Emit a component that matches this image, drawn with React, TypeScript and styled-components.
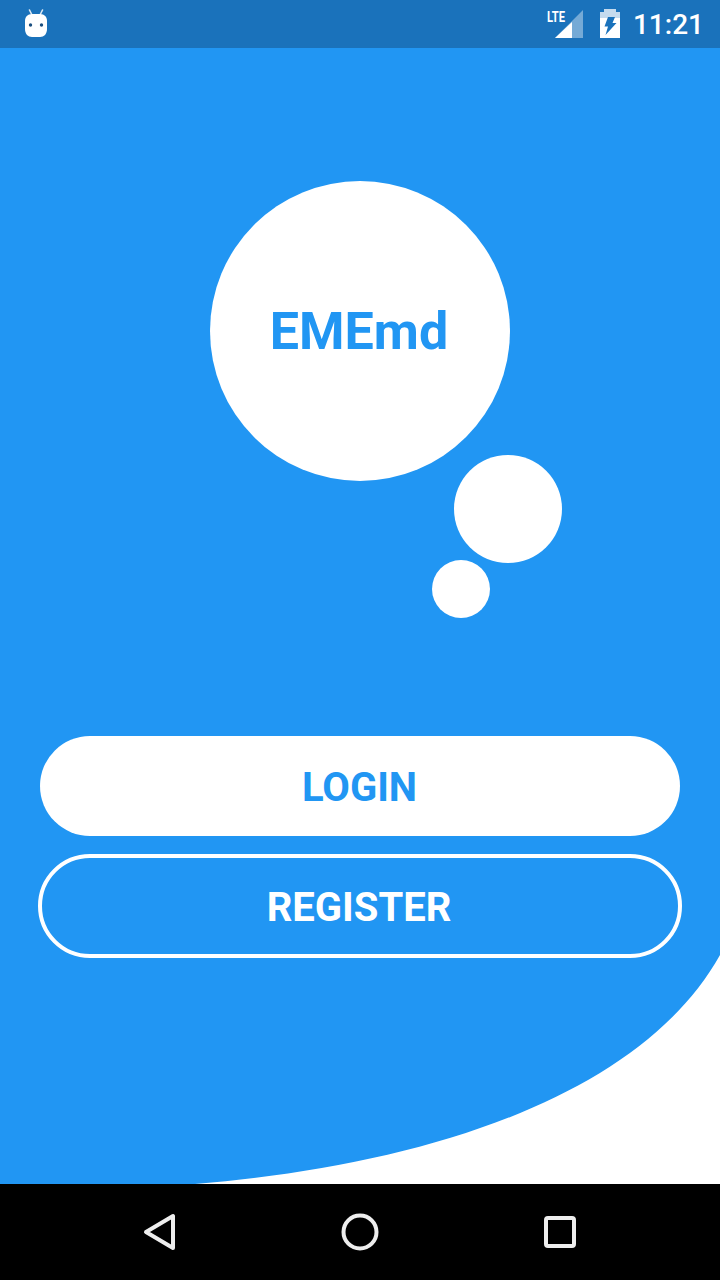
import React from 'react';
import styled, { createGlobalStyle } from 'styled-components';

const Global = createGlobalStyle`
  html, body { margin: 0; padding: 0; background: #000; }
  * { box-sizing: border-box; }
`;

const Phone = styled.div`
  width: 720px;
  height: 1280px;
  display: flex;
  flex-direction: column;
  overflow: hidden;
  font-family: Roboto, "Liberation Sans", sans-serif;
`;

const StatusBar = styled.header`
  height: 48px;
  flex: none;
  display: flex;
  align-items: center;
  justify-content: space-between;
  padding: 0 16px 0 24px;
  background: #1a72bb;
  color: #fff;
`;

const StatusGroup = styled.div`
  display: flex;
  align-items: center;
`;

const Clock = styled.span`
  font-size: 28px;
  font-weight: 500;
  line-height: 48px;
  margin-left: 13px;
  padding-top: 1px;
`;

const Screen = styled.main`
  position: relative;
  flex: 1;
  display: flex;
  flex-direction: column;
  background: #2196f3;
`;

const Swoosh = styled.svg`
  position: absolute;
  inset: 0;
`;

const Bubble = styled.div<{ $size: number; $left: number; $top: number }>`
  position: relative;
  width: ${p => p.$size}px;
  height: ${p => p.$size}px;
  margin-left: ${p => p.$left}px;
  margin-top: ${p => p.$top}px;
  border-radius: 50%;
  background: #fff;
  display: flex;
  align-items: center;
  justify-content: center;
`;

const Brand = styled.h1`
  margin: 0;
  padding: 2px 2px 0 0;
  color: #2196f3;
  font-size: 52px;
  font-weight: 700;
  line-height: 1;
`;

const Actions = styled.div`
  position: relative;
  display: flex;
  flex-direction: column;
  align-items: center;
  margin-top: 118px;
  gap: 18px;
`;

const LoginButton = styled.button`
  width: 640px;
  height: 100px;
  border: 0;
  border-radius: 50px;
  background: #fff;
  color: #2196f3;
  font: 700 40px Roboto, "Liberation Sans", sans-serif;
  padding: 2px 1px 0 0;
`;

const RegisterButton = styled.button`
  width: 644px;
  height: 104px;
  border: 4px solid #fff;
  border-radius: 52px;
  background: transparent;
  color: #fff;
  font: 700 40px Roboto, "Liberation Sans", sans-serif;
  padding: 2px 2px 0 0;
`;

const NavBar = styled.nav`
  height: 96px;
  flex: none;
  display: flex;
  justify-content: center;
  align-items: center;
  background: #000;
`;

const NavSlot = styled.div`
  width: 200px;
  display: flex;
  justify-content: center;
`;

const navStroke = { fill: 'none', stroke: '#eee', strokeWidth: 4, strokeLinejoin: 'round' as const };

export default function App() {
  return (
    <Phone>
      <Global />
      <StatusBar>
        <svg width="24" height="30" viewBox="0 0 24 30">
          <path d="M5.5 1 L8 6 M18.5 1 L16 6" stroke="#dce8f3" strokeWidth="1.6" strokeLinecap="round" />
          <path d="M8 5 H16 C20.5 5 23 8 23 12 V20 C23 25 20 28 16 28 H8 C4 28 1 25 1 20 V12 C1 8 3.5 5 8 5 Z" fill="#fff" />
          <circle cx="6.5" cy="16" r="1.7" fill="#1a4f80" />
          <circle cx="17.5" cy="16" r="1.7" fill="#1a4f80" />
        </svg>
        <StatusGroup>
          <svg width="40" height="30" viewBox="0 0 40 30">
            <path d="M38 1 V29 H10 Z" fill="#fff" fillOpacity="0.4" />
            <path d="M27 13 V29 H10 Z" fill="#fff" />
            <text x="2" y="13" fontFamily="Roboto, sans-serif" fontWeight="700" fontSize="15" fill="#fff" textLength="18" lengthAdjust="spacingAndGlyphs">LTE</text>
          </svg>
          <svg width="20" height="30" viewBox="0 0 20 30" style={{ marginLeft: 15 }}>
            <path d="M4 0 H16 V3 H20 V9 H0 V3 H4 Z" fill="#fff" fillOpacity="0.75" />
            <path d="M0 9 H20 V29 H0 Z" fill="#fff" />
            <path d="M8 8 H15 L12.5 14 H16.5 L5.5 26 L8 17.5 H4.5 Z" fill="#1a72bb" />
          </svg>
          <Clock>11:21</Clock>
        </StatusGroup>
      </StatusBar>
      <Screen>
        <Swoosh width="720" height="1136" viewBox="0 48 720 1136">
          <path d="M195 1184 C 420 1166 640 1098 720 955 V1184 Z" fill="#fff" />
        </Swoosh>
        <Bubble $size={300} $left={210} $top={133}>
          <Brand>EMEmd</Brand>
        </Bubble>
        <Bubble $size={108} $left={454} $top={-26} />
        <Bubble $size={58} $left={432} $top={-3} />
        <Actions>
          <LoginButton>LOGIN</LoginButton>
          <RegisterButton>REGISTER</RegisterButton>
        </Actions>
      </Screen>
      <NavBar>
        <NavSlot>
          <svg width="40" height="44" viewBox="0 0 40 44">
            <path d="M6 22 L33 6 V38 Z" {...navStroke} />
          </svg>
        </NavSlot>
        <NavSlot>
          <svg width="40" height="40" viewBox="0 0 40 40">
            <circle cx="20" cy="20" r="16.5" {...navStroke} />
          </svg>
        </NavSlot>
        <NavSlot>
          <svg width="40" height="40" viewBox="0 0 40 40">
            <rect x="6" y="6" width="28" height="28" rx="2" {...navStroke} />
          </svg>
        </NavSlot>
      </NavBar>
    </Phone>
  );
}
